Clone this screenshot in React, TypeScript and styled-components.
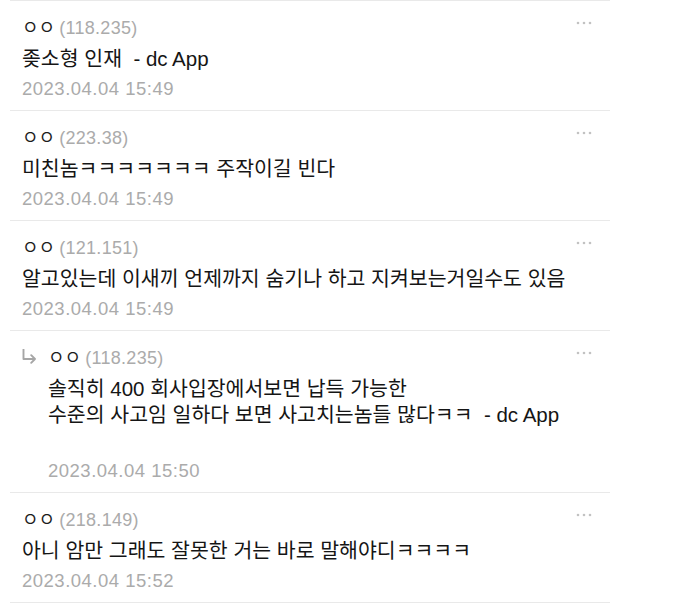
import styled, { createGlobalStyle } from "styled-components";

const GlobalStyle = createGlobalStyle`
  html, body {
    margin: 0;
    padding: 0;
    background: #ffffff;
  }
  body {
    font-family: "Liberation Sans", "Noto Sans CJK KR", sans-serif;
    color: #151515;
  }
`;

const List = styled.ul`
  list-style: none;
  margin: 0 0 0 10px;
  padding: 0;
  width: 600px;
  border-bottom: 1px solid #e9e9e9;
`;

const Row = styled.li`
  display: flex;
  align-items: flex-start;
  padding: 14px 17px 6px 12px;
  border-top: 1px solid #e9e9e9;
`;

const Gutter = styled.div`
  width: 26px;
  height: 22px;
  display: flex;
  align-items: center;
  flex-shrink: 0;
`;

const Body = styled.div`
  flex: 1;
  min-width: 0;
`;

const Name = styled.div`
  height: 22px;
  line-height: 22px;
  font-size: 18px;
  white-space: nowrap;
`;

const Nick = styled.span`
  font-family: "Noto Sans CJK KR", sans-serif;
  color: #1c1c1c;
  margin-right: 4px;
`;

const Ip = styled.span`
  font-family: "Liberation Sans", sans-serif;
  color: #ababab;
  letter-spacing: 0.3px;
`;

const Content = styled.div`
  margin-top: 9px;
  font-size: 20.5px;
  line-height: 26px;
  white-space: pre;
  color: #151515;
`;

const Line = styled.div<{ $tight?: boolean }>`
  min-height: ${({ $tight }) => ($tight ? "25.5px" : "26px")};
`;

const Date = styled.div`
  margin-top: 2px;
  font-size: 18.5px;
  line-height: 30px;
  letter-spacing: 0.5px;
  color: #ababab;
`;

const More = styled.button`
  border: 0;
  background: none;
  padding: 0;
  width: 18px;
  height: 16px;
  display: flex;
  align-items: center;
  justify-content: center;
  cursor: pointer;
  flex-shrink: 0;
`;

interface Comment {
  nick: string;
  ip: string;
  lines: string[];
  date: string;
  reply?: boolean;
}

const comments: Comment[] = [
  {
    nick: "ㅇㅇ",
    ip: "(118.235)",
    lines: ["좆소형 인재  - dc App"],
    date: "2023.04.04 15:49",
  },
  {
    nick: "ㅇㅇ",
    ip: "(223.38)",
    lines: ["미친놈ㅋㅋㅋㅋㅋㅋㅋ 주작이길 빈다"],
    date: "2023.04.04 15:49",
  },
  {
    nick: "ㅇㅇ",
    ip: "(121.151)",
    lines: ["알고있는데 이새끼 언제까지 숨기나 하고 지켜보는거일수도 있음"],
    date: "2023.04.04 15:49",
  },
  {
    nick: "ㅇㅇ",
    ip: "(118.235)",
    lines: [
      "솔직히 400 회사입장에서보면 납득 가능한",
      "수준의 사고임 일하다 보면 사고치는놈들 많다ㅋㅋ  - dc App",
      "",
    ],
    date: "2023.04.04 15:50",
    reply: true,
  },
  {
    nick: "ㅇㅇ",
    ip: "(218.149)",
    lines: ["아니 암만 그래도 잘못한 거는 바로 말해야디ㅋㅋㅋㅋ"],
    date: "2023.04.04 15:52",
  },
];

const ReplyArrow = () => (
  <svg width="15" height="15" viewBox="0 0 15 15" fill="none">
    <path
      d="M1.5 0.5 V10 H13 M9.2 6.2 L13 10 L9.2 13.8"
      stroke="#a6a6a6"
      strokeWidth="1.9"
      strokeLinecap="round"
      strokeLinejoin="round"
    />
  </svg>
);

const DotsIcon = () => (
  <svg width="18" height="4" viewBox="0 0 18 4">
    <circle cx="3" cy="2" r="1.3" fill="#c2c2c2" />
    <circle cx="9" cy="2" r="1.3" fill="#c2c2c2" />
    <circle cx="15" cy="2" r="1.3" fill="#c2c2c2" />
  </svg>
);

const CommentRow: React.FC<{ comment: Comment }> = ({ comment }) => (
  <Row>
    {comment.reply && (
      <Gutter>
        <ReplyArrow />
      </Gutter>
    )}
    <Body>
      <Name>
        <Nick>{comment.nick}</Nick>
        <Ip>{comment.ip}</Ip>
      </Name>
      <Content>
        {comment.lines.map((line, i) => (
          <Line key={i} $tight={comment.lines.length > 1}>
            {line || "\u00a0"}
          </Line>
        ))}
      </Content>
      <Date>{comment.date}</Date>
    </Body>
    <More aria-label="more">
      <DotsIcon />
    </More>
  </Row>
);

export default function App() {
  return (
    <>
      <GlobalStyle />
      <List>
        {comments.map((c, i) => (
          <CommentRow key={i} comment={c} />
        ))}
      </List>
    </>
  );
}
